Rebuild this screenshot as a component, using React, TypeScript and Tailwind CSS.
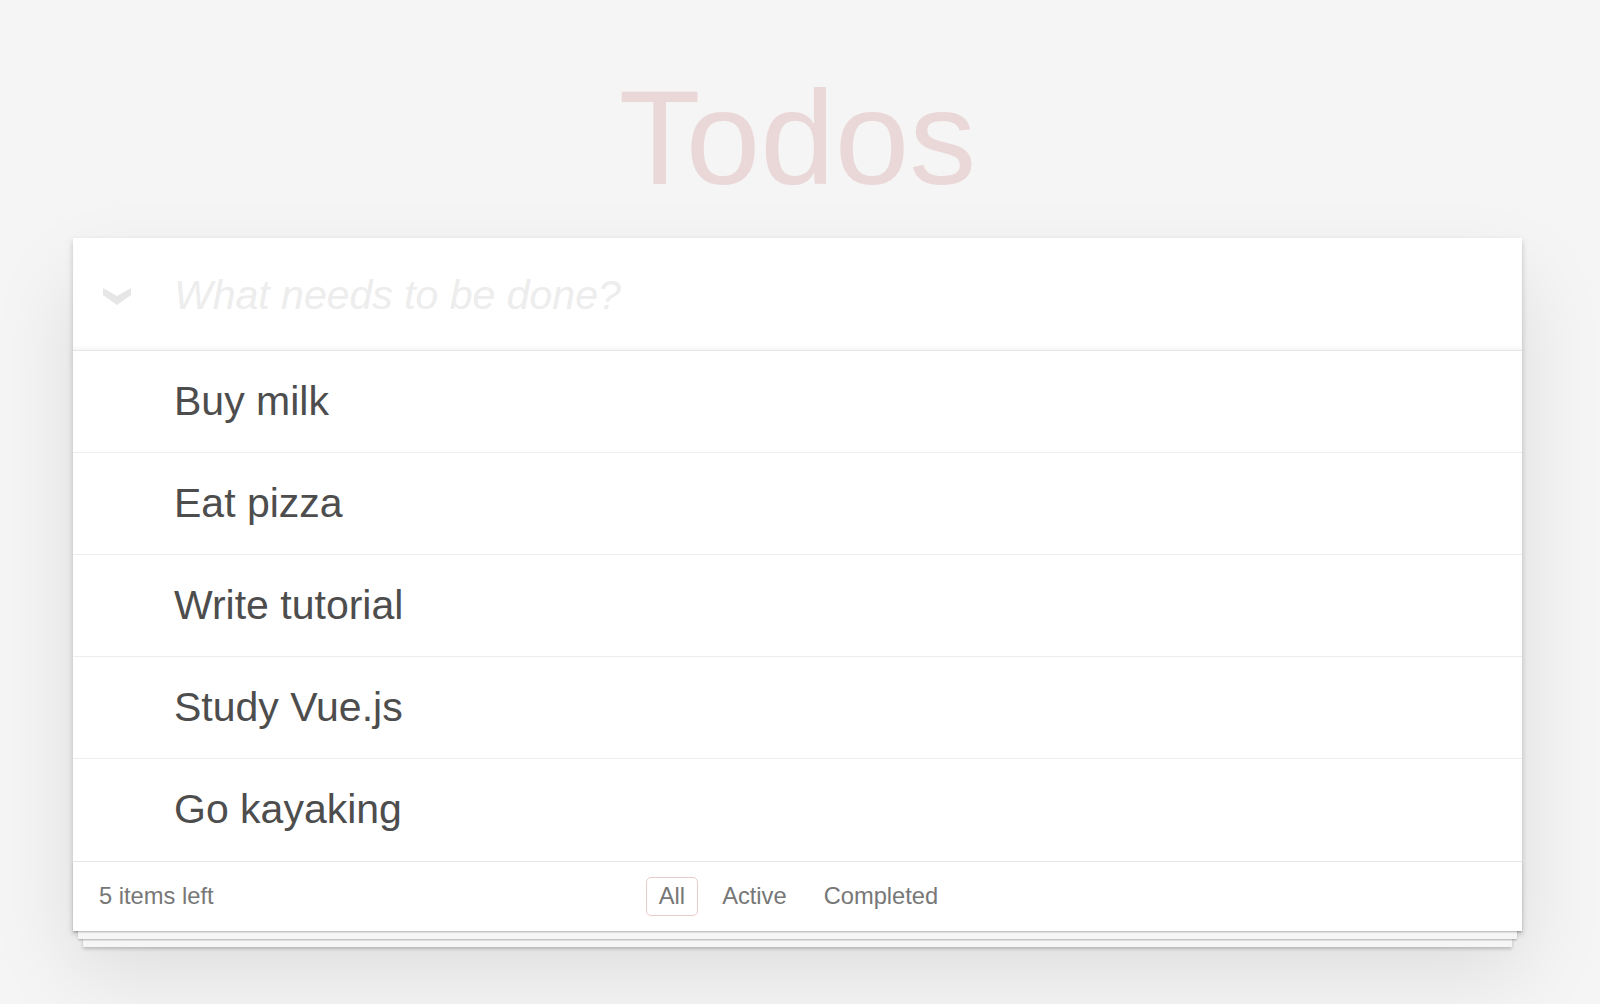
import React, { useState } from 'react'

const initialTodos = [
  { id: 1, title: 'Buy milk', done: false },
  { id: 2, title: 'Eat pizza', done: false },
  { id: 3, title: 'Write tutorial', done: false },
  { id: 4, title: 'Study Vue.js', done: false },
  { id: 5, title: 'Go kayaking', done: false },
]

const filters = ['All', 'Active', 'Completed']

export default function App() {
  const [todos] = useState(initialTodos)
  const [filter, setFilter] = useState('All')
  const [draft, setDraft] = useState('')

  const left = todos.filter(t => !t.done).length

  return (
    <div className="min-h-screen bg-[#f5f5f5] font-['Liberation_Sans',Arial,sans-serif] pt-[71px]">
      <div className="ml-[73px] w-[1449px]">
        <h1 className="text-center text-[134px] leading-[134px] font-normal text-[#ead7d7]">Todos</h1>

        {/* card */}
        <section className="mt-[33px] bg-white shadow-[0_3px_6px_0_rgba(0,0,0,0.2),0_40px_80px_0_rgba(0,0,0,0.1)]">
          <header className="h-[112px] flex items-center shadow-[inset_0_-3px_2px_rgba(0,0,0,0.03)]">
            <div className="w-[101px] pl-[30px] shrink-0">
              <svg width="28" height="17" viewBox="0 0 28 17" className="mt-[5px]">
                <polygon points="0,0 14,8 28,0 28,7 14,17 0,7" fill="#e6e6e6" />
              </svg>
            </div>
            <input
              value={draft}
              onChange={e => setDraft(e.target.value)}
              placeholder="What needs to be done?"
              className="flex-1 mt-[4px] bg-transparent outline-none text-[41px] text-[#4d4d4d] placeholder:italic placeholder:text-[#ededed]"
            />
          </header>

          <ul className="border-t border-[#e6e6e6]">
            {todos.map((todo, i) => (
              <li
                key={todo.id}
                className={
                  'h-[102px] flex items-center pl-[101px] text-[41px] text-[#4d4d4d] ' +
                  (i < todos.length - 1 ? 'border-b border-[#ededed]' : '')
                }
              >
                {todo.title}
              </li>
            ))}
          </ul>

          {/* footer with stacked sheets */}
          <footer className="h-[70px] border-t border-[#e6e6e6] pl-[26px] pr-[24px] grid grid-cols-[1fr_auto_1fr] items-center text-[23.7px] leading-[1.15] text-[#777] shadow-[0_1.6px_1.6px_rgba(0,0,0,0.2),0_13px_0_-5px_#f6f6f6,0_14.7px_1.6px_-5px_rgba(0,0,0,0.2),0_26px_0_-10px_#f6f6f6,0_27.7px_3.3px_-10px_rgba(0,0,0,0.2)]">
            <span>{left} items left</span>
            <div className="flex gap-[11px]">
              {filters.map(f => (
                <button
                  key={f}
                  onClick={() => setFilter(f)}
                  className={
                    'px-[12px] py-[5px] rounded-[5px] border ' +
                    (filter === f ? 'border-[#eacbcb]' : 'border-transparent')
                  }
                >
                  {f}
                </button>
              ))}
            </div>
            <span />
          </footer>
        </section>
      </div>
    </div>
  )
}
